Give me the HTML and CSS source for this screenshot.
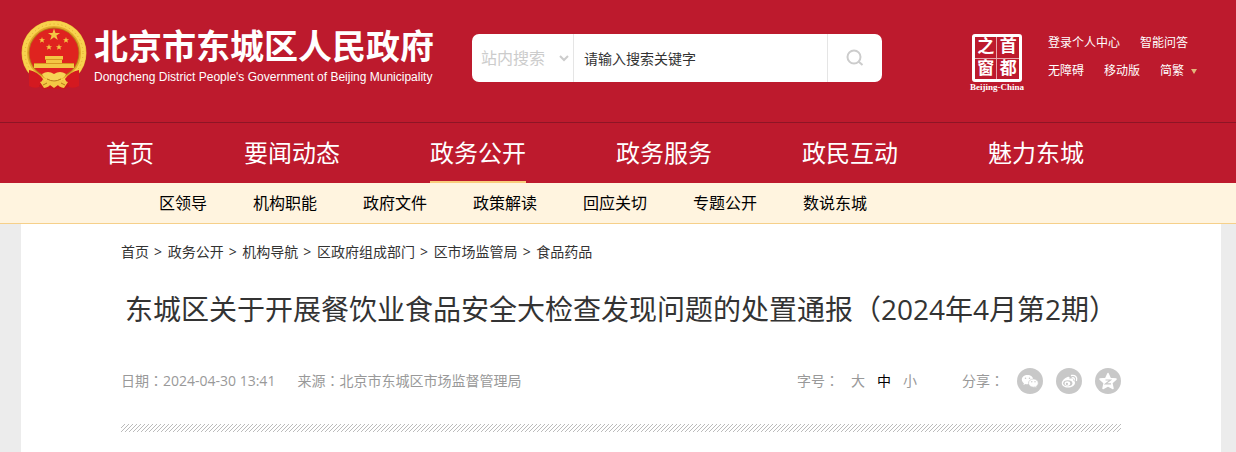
FILE: index.html
```
<!DOCTYPE html>
<html lang="zh-CN">
<head>
<meta charset="UTF-8">
<title>东城区关于开展餐饮业食品安全大检查发现问题的处置通报</title>
<meta name="viewport" content="width=device-width, initial-scale=1">
<link rel="stylesheet" href="styles.css">
</head>

<body>
<header class="header">
  <div class="header-top">
    <a class="logo" href="#">
      <svg class="emblem" viewBox="0 0 66 70">
        <path d="M10 48L8 65q5 4 9 1l6 3h20l6-3q4 3 9-1l-2-17z" fill="#c8161d"/>
        <path d="M12 52l-1 13M17 54l1 12M54 52l1 13M49 54l-1 12" stroke="#8f0c14" stroke-width="1.5"/>
        <circle cx="33" cy="33" r="32.5" fill="#e3ab2c"/>
        <circle cx="33" cy="33" r="29.500" fill="none" stroke="#f8d24e" stroke-width="5"/>
        <circle cx="33" cy="33" r="29" fill="none" stroke="#e0a92f" stroke-width="1" stroke-dasharray="1 3"/>
        <circle cx="33" cy="33" r="25.5" fill="#b9781a"/>
        <circle cx="33" cy="33" r="24.5" fill="#df231f"/>
        <path d="M33 8.500l1.500 4.400h4.600l-3.700 2.700 1.400 4.400-3.800-2.700-3.800 2.700 1.400-4.400-3.700-2.700h4.600z" fill="#f3c744"/>
        <g fill="#f3c744">
          <path d="M21 17l.8 2.200h2.300l-1.800 1.400.7 2.200-2-1.300-2 1.300.7-2.200-1.800-1.400h2.300z"/>
          <path d="M45 17l.8 2.200h2.300l-1.800 1.400.7 2.200-2-1.300-2 1.300.7-2.200-1.800-1.400h2.300z"/>
          <path d="M28 24l.8 2.200h2.300l-1.800 1.400.7 2.200-2-1.300-2 1.300.7-2.200-1.800-1.400h2.300z"/>
          <path d="M38 24l.8 2.200h2.300l-1.800 1.400.7 2.200-2-1.300-2 1.300.7-2.200-1.800-1.400h2.300z"/>
          <path d="M24 36h18v3h-1v4h12v5H13v-5h12v-4h-1z"/>
        </g>
        <path d="M13 43.500h40M24 39.500h18" stroke="#d79520" stroke-width="1"/>
        <path d="M8 50q9 2 14 9l-4 8q-5 2-10-1zM58 50q-9 2-14 9l4 8q5 2 10-1z" fill="#d41920"/>
        <path d="M21 54q6-4 12 0 6-4 12 0-2 5-7 5l-5 3-5-3q-5 0-7-5z" fill="#f7d355"/>
        <path d="M19 62q7-3 14 0 7-3 14 0l-4 6q-5-1-6-3l-4 3-4-3q-1 2-6 3z" fill="#f3c744"/>
        <path d="M26 59q7 4 14 0M22 65l4-2M44 65l-4-2" stroke="#b9781a" stroke-width="1" fill="none"/>
      </svg>
      <span class="logo-text">
        <span class="logo-cn">北京市东城区人民政府</span>
        <span class="logo-en">Dongcheng District People's Government of Beijing Municipality</span>
      </span>
    </a>

    <form class="search">
      <div class="search-type">
        <select aria-label="搜索范围">
          <option>站内搜索</option>
        </select>
        <svg class="chevron" viewBox="0 0 10 8"><path d="M1 2l4 4 4-4" fill="none" stroke="#ccc" stroke-width="2"/></svg>
      </div>
      <input type="text" placeholder="请输入搜索关键字" aria-label="请输入搜索关键字">
      <button type="submit" aria-label="搜索">
        <svg viewBox="0 0 18 18"><circle cx="8" cy="8" r="6.500" fill="none" stroke="#ccc" stroke-width="2"/><path d="M12.500 12.500l4 3.500" stroke="#ccc" stroke-width="2"/></svg>
      </button>
    </form>

    <a class="seal" href="#">
      <span class="seal-box">
        <span>之</span><span>首</span>
        <span>窗</span><span>都</span>
      </span>
      <span class="seal-en">Beijing-China</span>
    </a>

    <div class="top-links">
      <div class="top-row">
        <a href="#">登录个人中心</a>
        <a href="#">智能问答</a>
      </div>
      <div class="top-row">
        <a href="#">无障碍</a>
        <a href="#">移动版</a>
        <a class="lang" href="#">简繁</a>
      </div>
    </div>
  </div>

  <nav class="nav">
    <a href="#">首页</a>
    <a href="#">要闻动态</a>
    <a class="active" href="#">政务公开</a>
    <a href="#">政务服务</a>
    <a href="#">政民互动</a>
    <a href="#">魅力东城</a>
  </nav>
</header>

<nav class="sub-nav">
  <a href="#">区领导</a>
  <a href="#">机构职能</a>
  <a href="#">政府文件</a>
  <a href="#">政策解读</a>
  <a href="#">回应关切</a>
  <a href="#">专题公开</a>
  <a href="#">数说东城</a>
</nav>

<main class="container">
  <div class="crumbs">
    <a href="#">首页</a><span>&gt;</span>
    <a href="#">政务公开</a><span>&gt;</span>
    <a href="#">机构导航</a><span>&gt;</span>
    <a href="#">区政府组成部门</a><span>&gt;</span>
    <a href="#">区市场监管局</a><span>&gt;</span>
    <a href="#">食品药品</a>
  </div>

  <h1>东城区关于开展餐饮业食品安全大检查发现问题的处置通报（2024年4月第2期）</h1>

  <div class="meta">
    <span class="date">日期<span class="mid" lang="zh-TW">：</span>2024-04-30 13:41</span>
    <span>来源<span class="mid" lang="zh-TW">：</span>北京市东城区市场监督管理局</span>
    <div class="font-size">
      <span>字号<span class="mid" lang="zh-TW">：</span></span>
      <button type="button">大</button>
      <button type="button" class="on">中</button>
      <button type="button">小</button>
    </div>
    <div class="share">
      <span>分享<span class="mid" lang="zh-TW">：</span></span>
      <a href="#" aria-label="微信">
        <svg viewBox="0 0 26 26">
          <circle cx="13" cy="13" r="13" fill="#c8c8c8"/>
          <path d="M10.500 7c-3.200 0-5.700 2-5.700 4.600 0 1.500.8 2.800 2.100 3.600l-.5 1.800 2.100-1.100c.7.200 1.300.3 2 .3 3.200 0 5.700-2 5.700-4.600S13.700 7 10.500 7z" fill="#fff"/>
          <path d="M16.400 11c-2.700 0-4.900 1.800-4.900 4.100s2.200 4.100 4.900 4.100c.6 0 1.200-.1 1.700-.3l1.800 1-.5-1.600c1.200-.8 1.900-1.900 1.900-3.200 0-2.300-2.200-4.100-4.900-4.100z" fill="#fff" stroke="#c8c8c8" stroke-width=".7"/>
          <g fill="#c8c8c8"><circle cx="8.500" cy="10.300" r=".8"/><circle cx="12.500" cy="10.300" r=".8"/><circle cx="14.800" cy="13.800" r=".7"/><circle cx="18" cy="13.800" r=".7"/></g>
        </svg>
      </a>
      <a href="#" aria-label="微博">
        <svg viewBox="0 0 26 26">
          <circle cx="13" cy="13" r="13" fill="#c8c8c8"/>
          <path d="M11.500 9c1.700-.6 2.500.3 2 2 2.300-.9 4-.4 3.500 1.400 1.300.4 2 1.100 2 2.300 0 2.700-3.400 4.800-7 4.800-3.700 0-6.200-1.800-6.200-4.300 0-2.400 3-5.300 5.700-6.200z" fill="#fff"/>
          <ellipse cx="11.800" cy="15.200" rx="4.600" ry="3" fill="#c8c8c8"/>
          <ellipse cx="11.400" cy="15.500" rx="2.800" ry="2.300" fill="#fff"/>
          <circle cx="10.900" cy="15.900" r="1.100" fill="#c8c8c8"/>
          <path d="M15.500 7.500c3.700-.8 6 1.700 5 5M16.200 9.800c1.700-.3 2.500.7 2 2.200" fill="none" stroke="#fff" stroke-width="1.300" stroke-linecap="round"/>
        </svg>
      </a>
      <a href="#" aria-label="QQ空间">
        <svg viewBox="0 0 26 26">
          <circle cx="13" cy="13" r="13" fill="#c8c8c8"/>
          <path d="M13 5.500l2.300 5 5.700.6-4.200 3.900 1.200 5.500-5-2.700-5 2.700 1.200-5.500L5 11.100l5.700-.6z" fill="#fff" stroke="#fff" stroke-width="1.500" stroke-linejoin="round"/>
          <path d="M10.500 12h5l-5 3.800h5.500" fill="none" stroke="#c8c8c8" stroke-width="1.200"/>
        </svg>
      </a>
    </div>
  </div>

  <div class="stripes"></div>
</main>
</body>
</html>
```
FILE: styles.css
```
* {
  box-sizing: border-box;
}

body {
  margin: 0;
  min-height: 100vh;
  display: flex;
  flex-direction: column;
  background: #ececec;
  color: #333;
  font-family: "Open Sans", "Noto Sans CJK SC", sans-serif;
  font-size: 14px;
}

a {
  color: inherit;
  text-decoration: none;
}

button, input, select {
  border: none;
  background: none;
  padding: 0;
  margin: 0;
  font-family: inherit;
  outline: none;
}

svg {
  display: block;
}

/* Header */
.header {
  background: #bd1a2d;
  color: #fff;
}

.header-top {
  display: flex;
  align-items: flex-start;
  height: 122px;
  padding: 20px 40px 0 21px;
}

.logo {
  display: flex;
  gap: 7px;
}
.emblem {
  width: 66px;
  height: 70px;
}
.logo-text {
  display: flex;
  flex-direction: column;
  padding-top: 6px;
  white-space: nowrap;
}
.logo-cn {
  font-size: 34px;
  line-height: 40px;
  font-weight: bold;
}
.logo-en {
  font-family: "Liberation Sans", sans-serif;
  font-size: 12px;
  line-height: 22px;
}

.search {
  display: flex;
  width: 410px;
  height: 48px;
  margin: 14px 0 0 38px;
  background: #fff;
  border-radius: 7px;
}
.search-type {
  position: relative;
  width: 102px;
  border-right: 1px solid #e5e5e5;
}
.search-type select {
  appearance: none;
  width: 100%;
  height: 100%;
  padding-left: 9px;
  font-size: 16px;
  color: #ccc;
}
.chevron {
  position: absolute;
  right: 4px;
  top: 20px;
  width: 10px;
  height: 8px;
  pointer-events: none;
}
.search input {
  flex: 1;
  min-width: 0;
  padding-left: 10px;
  font-size: 14px;
}
.search input::placeholder {
  color: #333;
}
.search button {
  display: flex;
  justify-content: center;
  align-items: center;
  width: 55px;
  border-left: 1px solid #e5e5e5;
  cursor: pointer;
}
.search button svg {
  width: 18px;
  height: 18px;
}

.seal {
  margin: 14px 0 0 auto;
  display: flex;
  flex-direction: column;
  align-items: center;
}
.seal-box {
  display: grid;
  grid-template-columns: 1fr 1fr;
  gap: 1px;
  width: 50px;
  height: 48px;
  border: 3px solid #fff;
  border-radius: 3px;
  background: #e8a7ae;
}
.seal-box span {
  background: #bd1a2d;
  font-family: "Liberation Serif", "Noto Sans CJK SC", sans-serif;
  font-size: 17px;
  line-height: 20px;
  font-weight: bold;
  text-align: center;
}
.seal-en {
  font-family: "Liberation Serif", serif;
  font-size: 9px;
  line-height: 10px;
  font-weight: bold;
}

.top-links {
  margin: 9px 0 0 24px;
  width: 148px;
  font-size: 12px;
  line-height: 28px;
}
.top-row {
  display: flex;
  gap: 20px;
  white-space: nowrap;
}
.lang::after {
  content: "";
  display: inline-block;
  margin-left: 7px;
  border: 3px solid transparent;
  border-top: 5px solid #e2b77b;
  border-bottom: none;
  vertical-align: 1px;
}

/* Navigation */
.nav {
  display: flex;
  gap: 90px;
  padding-left: 106px;
  border-top: 1px solid #8e1525;
}
.nav a {
  height: 60px;
  font-size: 24px;
  line-height: 60px;
  white-space: nowrap;
}
.nav .active {
  border-bottom: 2px solid #f9cd7c;
}

.sub-nav {
  display: flex;
  gap: 46px;
  padding-left: 159px;
  background: #fff4df;
  border-bottom: 1px solid #f6d08a;
  color: #000;
  font-size: 16px;
  line-height: 40px;
  white-space: nowrap;
}

/* Article */
.container {
  flex: 1;
  margin: 0 15px 0 21px;
  padding: 0 100px;
  background: #fff;
}

.crumbs {
  padding-top: 14px;
  line-height: 28px;
}
.crumbs span {
  margin: 0 2px 0 5px;
}

h1 {
  margin: 22px 0 0;
  font-size: 28px;
  line-height: 42px;
  font-weight: normal;
  text-align: center;
}

.meta {
  display: flex;
  align-items: center;
  margin-top: 38px;
  color: #999;
  line-height: 26px;
}
.date {
  margin-right: 22px;
}
/* full-width colon set in the middle of its box */
.mid {
  font-family: "Noto Sans CJK TC", sans-serif;
  line-height: 1;
}
.font-size {
  display: flex;
  gap: 12px;
  margin-left: auto;
}
.font-size button {
  color: #999;
  font-size: 14px;
  line-height: 26px;
  cursor: pointer;
}
.font-size .on {
  color: #000;
}
.share {
  display: flex;
  gap: 13px;
  margin-left: 45px;
}
.share svg {
  width: 26px;
  height: 26px;
}

.stripes {
  height: 8px;
  margin-top: 30px;
  background: linear-gradient(135deg, #fff 40%, #bbb 40% 60%, #fff 60%) 0 0 / 4px 4px;
}
```
